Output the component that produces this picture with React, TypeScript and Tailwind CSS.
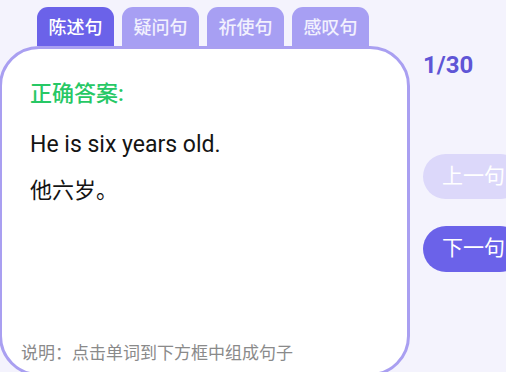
const tabs = ['陈述句', '疑问句', '祈使句', '感叹句'];

const font = 'font-[Roboto,"Noto_Sans_CJK_SC",sans-serif]';

export default function App() {
  const active = 0;

  return (
    <div className={`h-[372px] w-[506px] overflow-hidden bg-[#f4f3fd] ${font}`}>
      <div className="flex">
        {/* Left: tabs + answer card */}
        <div className="w-[410px] shrink-0">
          <div className="flex gap-[8px] pl-[37px] pt-[7px]">
            {tabs.map((t, i) => (
              <div
                key={t}
                className={
                  i === active
                    ? 'flex h-[39px] w-[77px] items-center justify-center rounded-t-[11px] bg-[#6b62e9] pt-px text-[18px] font-medium text-white'
                    : 'flex h-[39px] w-[77px] items-center justify-center rounded-t-[11px] bg-[#a79ff3] pt-px text-[18px] font-medium text-white/85'
                }
              >
                {t}
              </div>
            ))}
          </div>

          <div className="-ml-px flex h-[330px] flex-col rounded-[40px] border-[3px] border-[#a99ff1] bg-white pl-[28px] pr-4">
            <div className="mt-[30px] text-[22px] font-medium leading-[30px] text-[#27c865]">正确答案:</div>
            <div className="mt-[21px] text-[23px] leading-[30px] text-[#141414]">He is six years old.</div>
            <div className="mt-[16px] text-[22px] leading-[30px] text-[#141414]">他六岁。</div>
            <div className="-ml-[9px] mt-auto mb-[8px] text-[17px] leading-[24px] text-[#8a8a8a]">
              说明：点击单词到下方框中组成句子
            </div>
          </div>
        </div>

        {/* Right: counter + navigation */}
        <div className="flex flex-col pl-[13px]">
          <div className="mt-[50px] text-[24px] font-bold leading-[30px] text-[#5f55d6]">1/30</div>
          <button className="mt-[74px] flex h-[45px] w-[100px] items-center rounded-full bg-[#dcd8fa] pl-[19px] text-[21px] text-white">
            上一句
          </button>
          <button className="mt-[27px] flex h-[46px] w-[100px] items-center rounded-full bg-[#6b62e9] pl-[19px] text-[21px] text-white">
            下一句
          </button>
        </div>
      </div>
    </div>
  );
}
